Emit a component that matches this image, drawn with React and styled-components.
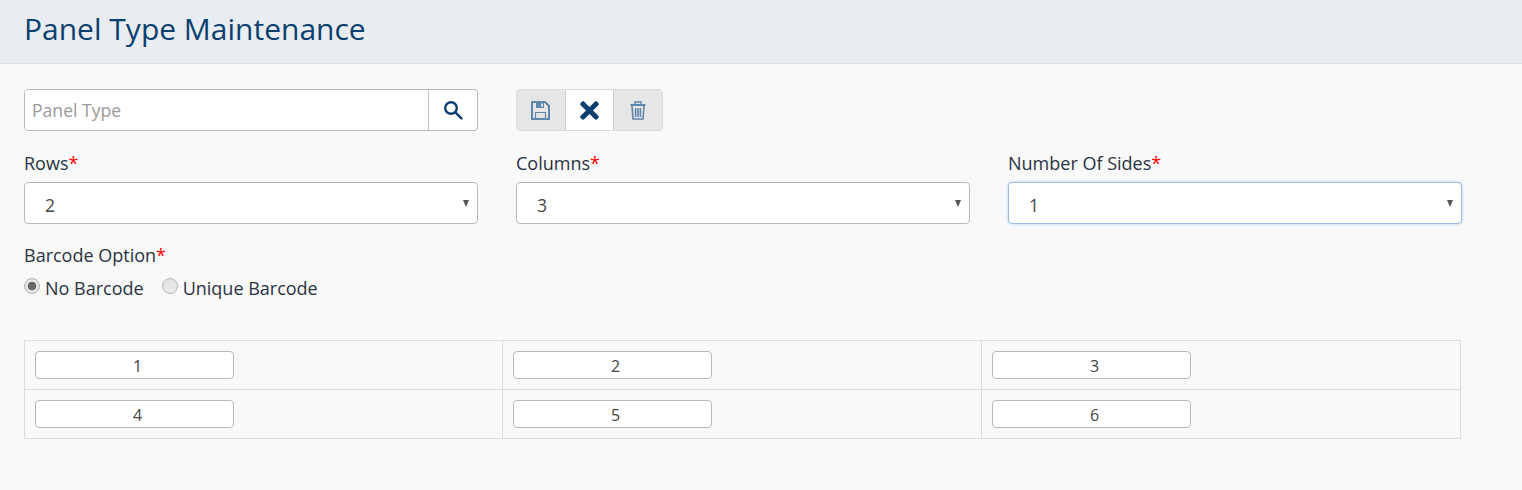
import React from "react";
import styled, { createGlobalStyle } from "styled-components";
import { FaTimes } from "react-icons/fa";

const GlobalStyle = createGlobalStyle`
  html, body {
    margin: 0;
    padding: 0;
    background: #f9f9f9;
    font-family: "Open Sans", "Liberation Sans", sans-serif;
  }
`;

const SearchIcon = () => (
  <svg width="20" height="20" viewBox="0 0 20 20" fill="none" stroke="#0b3f6f" strokeWidth="2.4">
    <circle cx="8" cy="8" r="5.8" />
    <path d="M12.4 12.4 L18.4 18.4" strokeLinecap="round" />
  </svg>
);

const SaveIcon = () => (
  <svg width="19" height="19" viewBox="0 0 19 19" fill="none" stroke="#5f86ab" strokeWidth="2">
    <path d="M1 1 H14 L18 5 V18 H1 Z" />
    <path d="M5 1.5 H13 V7 H5 Z" fill="#5f86ab" stroke="none" />
    <path d="M10.2 2.5 H12 V5.8 H10.2 Z" fill="#e6e6e6" stroke="none" />
    <path d="M4.5 18 V11.5 H14.5 V18" strokeWidth="1.2" />
  </svg>
);

const TrashIcon = () => (
  <svg width="16" height="19" viewBox="0 0 16 19" fill="none" stroke="#5f86ab" strokeWidth="1.4">
    <path d="M0.5 4 H15.5" strokeWidth="1.8" />
    <path d="M5 3.5 V1 H11 V3.5" />
    <path d="M2 5 L3 18 H13 L14 5" strokeWidth="1.6" />
    <path d="M5.6 7 V16 M8 7 V16 M10.4 7 V16" strokeWidth="1.6" />
  </svg>
);

const Field = ({ label, value, focused }) => (
  <div>
    <Label>
      {label}
      <Required>*</Required>
    </Label>
    <SelectWrap>
      <Select defaultValue={value} $focused={focused}>
        <option value={value}>{value}</option>
      </Select>
    </SelectWrap>
  </div>
);

const App = () => {
  return (
    <Page>
      <GlobalStyle />
      <Header>
        <Title>Panel Type Maintenance</Title>
      </Header>
      <Content>
        <FormGrid>
          <SearchBox>
            <SearchInput placeholder="Panel Type" />
            <SearchButton>
              <SearchIcon />
            </SearchButton>
          </SearchBox>
          <Toolbar>
            <ToolButton>
              <SaveIcon />
            </ToolButton>
            <ToolButton $active>
              <FaTimes />
            </ToolButton>
            <ToolButton>
              <TrashIcon />
            </ToolButton>
          </Toolbar>
        </FormGrid>

        <SelectGrid>
          <Field label="Rows" value="2" />
          <Field label="Columns" value="3" />
          <Field label="Number Of Sides" value="1" focused />
        </SelectGrid>

        <Label>
          Barcode Option<Required>*</Required>
        </Label>
        <RadioRow>
          <RadioLabel>
            <RadioDot $checked />
            No Barcode
          </RadioLabel>
          <RadioLabel>
            <RadioDot />
            Unique Barcode
          </RadioLabel>
        </RadioRow>

        <PanelTable>
          {[1, 2, 3, 4, 5, 6].map((n) => (
            <PanelCell key={n}>
              <PanelInput defaultValue={n} />
            </PanelCell>
          ))}
        </PanelTable>
      </Content>
    </Page>
  );
};

export default App;

const Page = styled.div`
  width: 1522px;
  height: 490px;
  overflow: hidden;
  background: #f9f9f9;
`;

const Header = styled.header`
  height: 63px;
  box-sizing: content-box;
  background: #e9ecf1;
  border-bottom: 1px solid #dfe2e6;
  padding-left: 24px;
  display: flex;
  align-items: center;
`;

const Title = styled.h1`
  margin: 0;
  font-size: 30px;
  font-weight: 400;
  color: #0b3f6f;
  line-height: 1;
  position: relative;
  top: -3px;
`;

const Content = styled.div`
  padding: 25px 0 0 24px;
  width: 1438px;
`;

const FormGrid = styled.div`
  display: grid;
  grid-template-columns: 454px 147px;
  column-gap: 38px;
  height: 42px;
`;

const SearchBox = styled.div`
  display: flex;
  height: 42px;
  box-sizing: border-box;
  border: 1px solid #b8b8b8;
  border-radius: 4px;
  background: #fff;
  overflow: hidden;
`;

const SearchInput = styled.input`
  flex: 1;
  min-width: 0;
  border: 0;
  outline: 0;
  padding: 0 7px;
  font: 400 17.6px "Open Sans", sans-serif;
  color: #333;

  &::placeholder {
    color: #9a9a9a;
    opacity: 1;
  }
`;

const SearchButton = styled.div`
  width: 48px;
  border-left: 1px solid #c4c4c4;
  display: flex;
  align-items: center;
  justify-content: center;
`;

const Toolbar = styled.div`
  display: flex;
  height: 42px;
  box-sizing: border-box;
  border: 1px solid #dcdcdc;
  border-radius: 4px;
  background: #e6e6e6;
  overflow: hidden;
`;

const ToolButton = styled.div`
  flex: 1;
  display: flex;
  align-items: center;
  justify-content: center;
  box-sizing: border-box;
  background: ${(p) => (p.$active ? "#fff" : "transparent")};
  color: ${(p) => (p.$active ? "#0b3f6f" : "#5f86ab")};
  font-size: 27px;
  border-left: ${(p) => (p.$active ? "1px solid #cfcfcf" : "0")};
  border-right: ${(p) => (p.$active ? "1px solid #cfcfcf" : "0")};
`;

const SelectGrid = styled.div`
  display: grid;
  grid-template-columns: repeat(3, 454px);
  column-gap: 38px;
  margin-top: 20px;
  margin-bottom: 19px;
`;

const Label = styled.div`
  font-size: 18px;
  line-height: 24px;
  height: 24px;
  color: #2a3342;
  margin-bottom: 7px;
`;

const Required = styled.span`
  color: #f00;
`;

const SelectWrap = styled.div`
  position: relative;

  &::after {
    content: "";
    position: absolute;
    right: 9px;
    top: 18px;
    border-left: 3.5px solid transparent;
    border-right: 3.5px solid transparent;
    border-top: 7px solid #555;
    pointer-events: none;
  }
`;

const Select = styled.select`
  display: block;
  width: 100%;
  height: 42px;
  box-sizing: border-box;
  appearance: none;
  background: #fff;
  border: 1px solid ${(p) => (p.$focused ? "#9dbbdc" : "#b8b8b8")};
  box-shadow: ${(p) => (p.$focused ? "0 0 3px rgba(102, 160, 233, 0.5)" : "none")};
  border-radius: 4px;
  padding: 3px 0 0 20px;
  font: 400 17.6px "Open Sans", sans-serif;
  color: #444;
  outline: 0;
`;

const RadioRow = styled.div`
  display: flex;
  gap: 18px;
  margin-top: 9px;
  height: 24px;
`;

const RadioLabel = styled.label`
  display: flex;
  align-items: center;
  gap: 5px;
  font-size: 18px;
  line-height: 24px;
  color: #2a3342;
`;

const RadioDot = styled.span`
  width: 16px;
  height: 16px;
  box-sizing: border-box;
  border-radius: 50%;
  border: 1px solid #b5b5b5;
  background: ${(p) =>
    p.$checked
      ? "radial-gradient(circle, #666 0 4px, #e4e4e4 4.6px)"
      : "linear-gradient(#e2e2e2, #ededed)"};
  position: relative;
  top: -2px;
`;

const PanelTable = styled.div`
  display: grid;
  grid-template-columns: 478px 479px 479px;
  width: 1437px;
  box-sizing: border-box;
  margin-top: 40px;
  border-top: 1px solid #dddddd;
  border-left: 1px solid #dddddd;
`;

const PanelCell = styled.div`
  height: 49px;
  box-sizing: border-box;
  padding: 10px;
  border-right: 1px solid #dddddd;
  border-bottom: 1px solid #dddddd;
`;

const PanelInput = styled.input`
  display: block;
  width: 199px;
  height: 28px;
  box-sizing: border-box;
  border: 1px solid #b8b8b8;
  border-radius: 4px;
  background: #fff;
  text-align: center;
  padding: 2px 0 0 6px;
  font: 400 16px "Open Sans", sans-serif;
  color: #444;
  outline: 0;
`;
